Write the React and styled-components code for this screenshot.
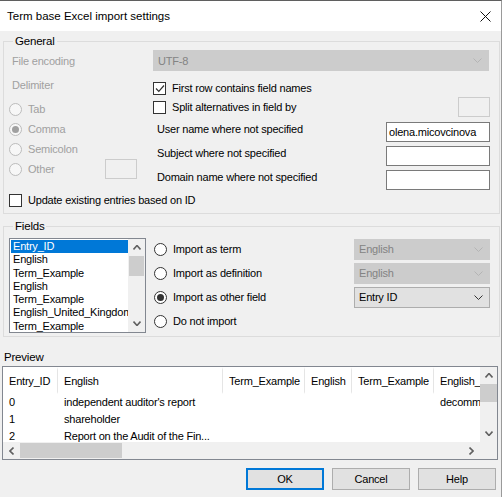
import React from 'react';
import styled, { createGlobalStyle } from 'styled-components';

const GlobalStyle = createGlobalStyle`
  html, body {
    margin: 0;
    padding: 0;
    background: #f0f0f0;
  }
  * {
    box-sizing: border-box;
  }
`;

const Window = styled.div`
  width: 502px;
  height: 497px;
  background: #f0f0f0;
  border-top: 1px solid #5f5f5f;
  border-right: 1px solid #9a9a9a;
  display: flex;
  flex-direction: column;
  overflow: hidden;
  font-family: "Liberation Sans", Arial, sans-serif;
  font-size: 11px;
  letter-spacing: -0.2px;
  color: #000;
`;

const TitleBar = styled.div`
  height: 30px;
  flex: 0 0 30px;
  background: #fff;
  display: flex;
  align-items: center;
  justify-content: space-between;
  padding: 0 10px 0 7px;
  font-size: 11.5px;
  letter-spacing: 0;
`;

const Body = styled.div`
  flex: 1;
  display: flex;
  flex-direction: column;
  padding: 3px 1px 0 3px;
`;

const Group = styled.fieldset`
  margin: ${(p) => p.$margin || '0'};
  border: 1px solid #dcdcdc;
  padding: ${(p) => p.$pad};
  min-width: 0;
`;

const Legend = styled.legend`
  padding: 0 2px;
  margin-left: 4px;
  line-height: 14px;
  font-size: 11.5px;
`;

const TopRow = styled.div`
  display: grid;
  grid-template-columns: 144px 1fr;
  align-items: center;
  height: 21px;
`;

const Columns = styled.div`
  display: grid;
  grid-template-columns: 144px 1fr;
`;

const Stack = styled.div`
  display: flex;
  flex-direction: column;
`;

const Label = styled.span`
  color: ${(p) => (p.$disabled ? '#a0a0a0' : '#000')};
  padding-left: ${(p) => p.$indent || 0}px;
  line-height: 14px;
  white-space: nowrap;
`;

const Row = styled.div`
  display: flex;
  align-items: ${(p) => p.$align || 'center'};
  height: ${(p) => p.$h}px;
  margin-top: ${(p) => p.$mt || 0}px;
`;

const Spacer = styled.div`
  flex: 1;
`;

const ComboBox = styled.div`
  height: 21px;
  width: ${(p) => p.$w}px;
  background: ${(p) => (p.$disabled ? '#cccccc' : '#e1e1e1')};
  border: 1px solid ${(p) => (p.$disabled ? '#cccccc' : '#adadad')};
  color: ${(p) => (p.$disabled ? '#838383' : '#000')};
  display: flex;
  align-items: center;
  justify-content: space-between;
  padding: 0 6px 0 4px;
`;

const TextBox = styled.div`
  height: 20px;
  width: ${(p) => p.$w}px;
  margin-right: ${(p) => p.$mr || 0}px;
  background: ${(p) => (p.$disabled ? '#f0f0f0' : '#fff')};
  border: 1px solid ${(p) => (p.$disabled ? '#cccccc' : '#7a7a7a')};
  display: flex;
  align-items: center;
  padding-left: 2px;
`;

const CheckBoxBox = styled.span`
  width: 13px;
  height: 13px;
  flex: 0 0 13px;
  border: 1px solid #333;
  background: #fff;
  display: inline-flex;
  align-items: center;
  justify-content: center;
  margin-right: 6px;
`;

const RadioCircle = styled.span`
  width: 13px;
  height: 13px;
  flex: 0 0 13px;
  border-radius: 50%;
  border: 1px solid ${(p) => (p.$disabled ? '#bcbcbc' : '#333')};
  background: ${(p) => (p.$disabled ? '#f7f7f7' : '#fff')};
  display: inline-flex;
  align-items: center;
  justify-content: center;
  margin-right: 6px;
  &::after {
    content: '';
    display: ${(p) => (p.$checked ? 'block' : 'none')};
    width: 7px;
    height: 7px;
    border-radius: 50%;
    background: ${(p) => (p.$disabled ? '#a0a0a0' : '#333')};
  }
`;

const FieldsBody = styled.div`
  display: flex;
  gap: 8px;
`;

const ListBox = styled.div`
  width: 137px;
  height: 95px;
  border: 1px solid #828790;
  background: #fff;
  display: flex;
`;

const Items = styled.div`
  flex: 1;
  padding: 1px 0 0 1px;
  overflow: hidden;
`;

const Item = styled.div`
  height: 13.3px;
  line-height: 13px;
  padding-left: 2px;
  white-space: nowrap;
  overflow: hidden;
  background: ${(p) => (p.$selected ? '#0078d7' : 'transparent')};
  color: ${(p) => (p.$selected ? '#fff' : '#000')};
`;

const VScroll = styled.div`
  width: 17px;
  flex: 0 0 17px;
  background: #f0f0f0;
  display: flex;
  flex-direction: column;
  align-items: center;
`;

const ArrowCell = styled.div`
  height: 17px;
  width: 17px;
  flex: 0 0 17px;
  display: flex;
  align-items: center;
  justify-content: center;
`;

const Thumb = styled.div`
  width: ${(p) => p.$w || 15}px;
  height: ${(p) => p.$h || 15}px;
  background: #cdcdcd;
`;

const Options = styled.div`
  flex: 1;
  display: flex;
  flex-direction: column;
  margin-top: -1px;
`;

const PreviewLabel = styled.div`
  margin: 13px 0 2px 1px;
  line-height: 14px;
  font-size: 11.5px;
`;

const ListView = styled.div`
  margin-left: -1px;
  width: 496px;
  height: 94px;
  border: 1px solid #828790;
  background: #fff;
  display: grid;
  grid-template-columns: 1fr 17px;
  grid-template-rows: 1fr 17px;
`;

const TableArea = styled.div`
  overflow: hidden;
`;

const Table = styled.div`
  display: grid;
  grid-template-columns: 55px 165px 82px 47px 82px 140px;
  width: 571px;
`;

const HeaderCell = styled.div`
  height: 27px;
  display: flex;
  align-items: center;
  padding-left: 6px;
  white-space: nowrap;
  overflow: hidden;
  border-right: 1px solid #e5e5e5;
  border-top: 3px solid #fff;
  border-bottom: 2px solid #fff;
`;

const Cell = styled.div`
  height: 17px;
  line-height: 17px;
  padding-left: 6px;
  white-space: nowrap;
  overflow: hidden;
`;

const HScroll = styled.div`
  background: #f0f0f0;
  display: flex;
  align-items: center;
`;

const Corner = styled.div`
  background: #f0f0f0;
`;

const ButtonRow = styled.div`
  display: flex;
  justify-content: flex-end;
  gap: 8px;
  margin-top: 8px;
  padding-right: 4px;
`;

const Button = styled.div`
  width: 78px;
  height: 22px;
  background: #e1e1e1;
  border: ${(p) => (p.$default ? '2px solid #0078d7' : '1px solid #adadad')};
  display: flex;
  align-items: center;
  justify-content: center;
`;

const Chevron = ({ color = '#333', dir = 'down', w = 9, h = 5, sw = 1 }) => {
  const paths = {
    down: `M0.5 0.5 L${w / 2} ${h - 0.5} L${w - 0.5} 0.5`,
    up: `M0.5 ${h - 0.5} L${w / 2} 0.5 L${w - 0.5} ${h - 0.5}`,
  };
  return (
    <svg width={w} height={h} viewBox={`0 0 ${w} ${h}`}>
      <path d={paths[dir]} stroke={color} strokeWidth={sw} fill="none" />
    </svg>
  );
};

const SideChevron = ({ dir = 'left' }) => (
  <svg width="5" height="8" viewBox="0 0 5 8">
    <path
      d={dir === 'left' ? 'M4.5 0.5 L1 4 L4.5 7.5' : 'M0.5 0.5 L4 4 L0.5 7.5'}
      stroke="#606060"
      strokeWidth="1.6"
      fill="none"
    />
  </svg>
);

const CheckBox = ({ checked, children }) => (
  <Row $h={18}>
    <CheckBoxBox>
      {checked && (
        <svg width="10" height="9" viewBox="0 0 10 9">
          <path d="M1 4.5 L3.8 7.3 L9 1.5" stroke="#333" strokeWidth="1.2" fill="none" />
        </svg>
      )}
    </CheckBoxBox>
    <Label>{children}</Label>
  </Row>
);

const Radio = ({ checked, disabled, children, h = 20 }) => (
  <Row $h={h}>
    <RadioCircle $checked={checked} $disabled={disabled} />
    <Label $disabled={disabled}>{children}</Label>
  </Row>
);

const fieldItems = [
  'Entry_ID',
  'English',
  'Term_Example',
  'English',
  'Term_Example',
  'English_United_Kingdom',
  'Term_Example',
];

const headers = ['Entry_ID', 'English', 'Term_Example', 'English', 'Term_Example', 'English_United_Kingdom'];

const rows = [
  ['0', "independent auditor's report", '', '', '', 'decommissioning'],
  ['1', 'shareholder', '', '', '', ''],
  ['2', 'Report on the Audit of the Fin...', '', '', '', ''],
];

export default function App() {
  return (
    <>
      <GlobalStyle />
      <Window>
        <TitleBar>
          <span>Term base Excel import settings</span>
          <svg width="11" height="11" viewBox="0 0 11 11">
            <path d="M0.5 0.5 L10.5 10.5 M10.5 0.5 L0.5 10.5" stroke="#111" strokeWidth="1" />
          </svg>
        </TitleBar>
        <Body>
          <Group $pad="2px 9px 6px 5px">
            <Legend>General</Legend>
            <TopRow>
              <Label $disabled $indent={3}>File encoding</Label>
              <ComboBox $w={336} $disabled>
                <span>UTF-8</span>
                <Chevron color="#b4b4b4" />
              </ComboBox>
            </TopRow>
            <Columns>
              <Stack>
                <Row $h={28}>
                  <Label $disabled $indent={3}>Delimiter</Label>
                </Row>
                <Radio disabled>Tab</Radio>
                <Radio disabled checked>Comma</Radio>
                <Radio disabled>Semicolon</Radio>
                <Row $h={20}>
                  <RadioCircle $disabled />
                  <Label $disabled>Other</Label>
                  <Spacer />
                  <TextBox $w={32} $mr={16} $disabled />
                </Row>
              </Stack>
              <Stack>
                <Row $h={8} />
                <CheckBox checked>First row contains field names</CheckBox>
                <Row $h={20}>
                  <CheckBoxBox />
                  <Label>Split alternatives in field by</Label>
                  <Spacer />
                  <TextBox $w={32} $disabled />
                </Row>
                <Row $h={20} $mt={5} $align="flex-start">
                  <Label $indent={4}>User name where not specified</Label>
                  <Spacer />
                  <TextBox $w={104}>olena.micovcinova</TextBox>
                </Row>
                <Row $h={20} $mt={4} $align="flex-start">
                  <Label $indent={4}>Subject where not specified</Label>
                  <Spacer />
                  <TextBox $w={104} />
                </Row>
                <Row $h={20} $mt={4} $align="flex-start">
                  <Label $indent={4}>Domain name where not specified</Label>
                  <Spacer />
                  <TextBox $w={104} />
                </Row>
              </Stack>
            </Columns>
            <Row $h={14} $mt={3}>
              <CheckBoxBox />
              <Label>Update existing entries based on ID</Label>
            </Row>
          </Group>

          <Group $pad="5px 9px 3px 5px" $margin="5px 0 0 0">
            <Legend>Fields</Legend>
            <FieldsBody>
              <ListBox>
                <Items>
                  {fieldItems.map((it, i) => (
                    <Item key={i} $selected={i === 0}>
                      {it}
                    </Item>
                  ))}
                </Items>
                <VScroll>
                  <ArrowCell>
                    <Chevron dir="up" color="#606060" w={8} h={5} sw={1.6} />
                  </ArrowCell>
                  <Thumb $h={20} />
                  <Spacer />
                  <ArrowCell>
                    <Chevron dir="down" color="#606060" w={8} h={5} sw={1.6} />
                  </ArrowCell>
                </VScroll>
              </ListBox>
              <Options>
                <Row $h={24}>
                  <RadioCircle />
                  <Label>Import as term</Label>
                  <Spacer />
                  <ComboBox $w={136} $disabled>
                    <span>English</span>
                    <Chevron color="#b4b4b4" />
                  </ComboBox>
                </Row>
                <Row $h={24}>
                  <RadioCircle />
                  <Label>Import as definition</Label>
                  <Spacer />
                  <ComboBox $w={136} $disabled>
                    <span>English</span>
                    <Chevron color="#b4b4b4" />
                  </ComboBox>
                </Row>
                <Row $h={24}>
                  <RadioCircle $checked />
                  <Label>Import as other field</Label>
                  <Spacer />
                  <ComboBox $w={136}>
                    <span>Entry ID</span>
                    <Chevron color="#333" />
                  </ComboBox>
                </Row>
                <Radio h={24}>Do not import</Radio>
              </Options>
            </FieldsBody>
          </Group>

          <PreviewLabel>Preview</PreviewLabel>
          <ListView>
            <TableArea>
              <Table>
                {headers.map((h, i) => (
                  <HeaderCell key={'h' + i}>{h}</HeaderCell>
                ))}
                {rows.map((r, ri) =>
                  r.map((c, ci) => <Cell key={ri + '-' + ci}>{c}</Cell>)
                )}
              </Table>
            </TableArea>
            <VScroll>
              <ArrowCell>
                <Chevron dir="up" color="#606060" w={8} h={5} sw={1.6} />
              </ArrowCell>
              <Thumb $h={18} $w={17} />
              <Spacer />
              <ArrowCell>
                <Chevron dir="down" color="#606060" w={8} h={5} sw={1.6} />
              </ArrowCell>
            </VScroll>
            <HScroll>
              <ArrowCell>
                <SideChevron dir="left" />
              </ArrowCell>
              <Thumb $w={102} $h={15} />
              <Spacer />
              <ArrowCell>
                <SideChevron dir="right" />
              </ArrowCell>
            </HScroll>
            <Corner />
          </ListView>

          <ButtonRow>
            <Button $default>OK</Button>
            <Button>Cancel</Button>
            <Button>Help</Button>
          </ButtonRow>
        </Body>
      </Window>
    </>
  );
}
